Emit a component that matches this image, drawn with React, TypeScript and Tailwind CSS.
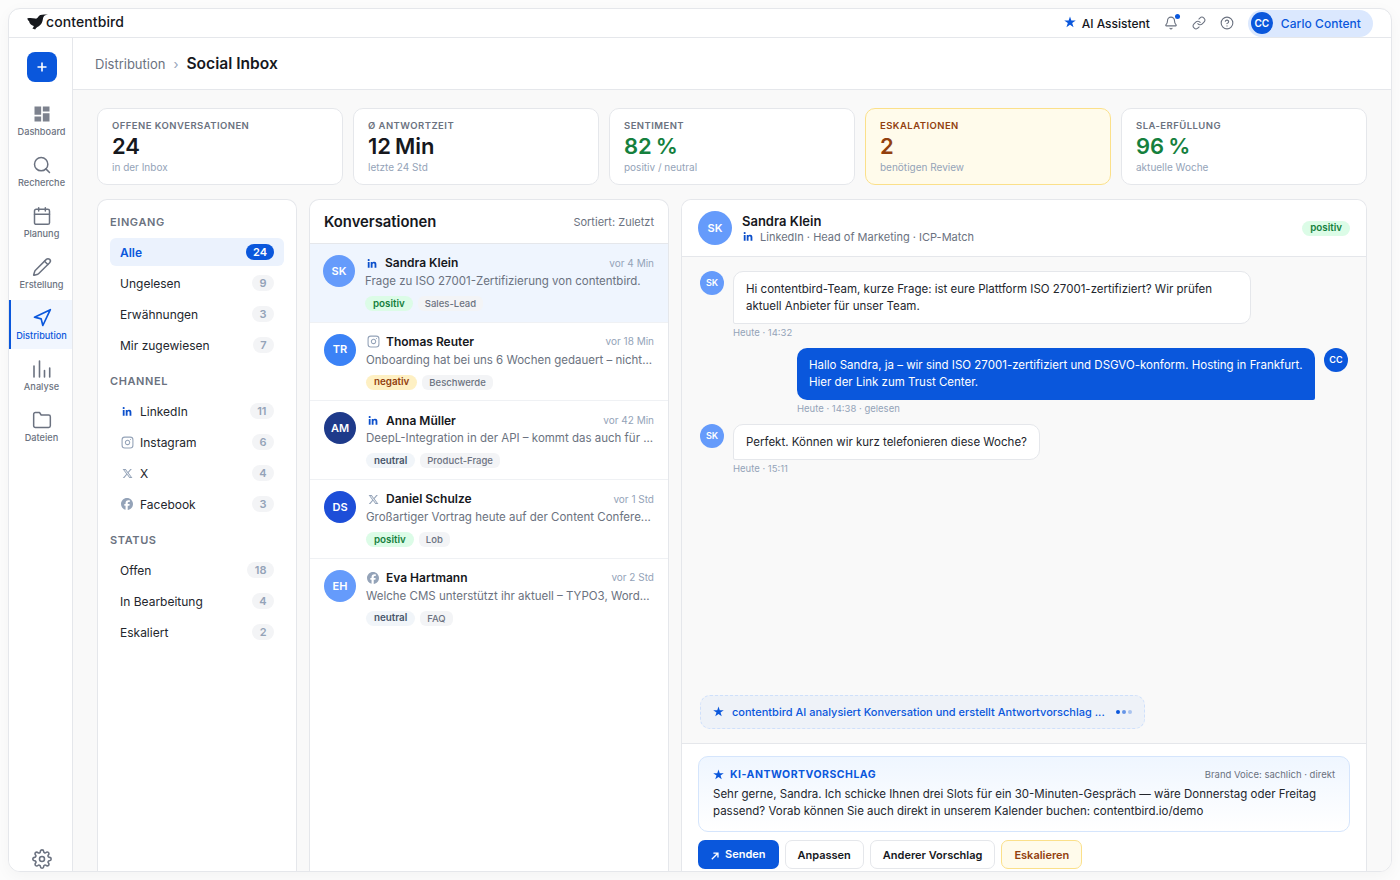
import React from 'react';
import { Bell, Calendar, CircleHelp, Instagram, Pencil, Search } from 'lucide-react';
import { FiFolder, FiLink, FiNavigation, FiSettings } from 'react-icons/fi';
import { FaFacebook, FaLinkedinIn, FaXTwitter } from 'react-icons/fa6';
import { MdDashboard } from 'react-icons/md';
import { clsx } from 'clsx';

type Channel = 'linkedin' | 'instagram' | 'x' | 'facebook';
type Sentiment = 'positiv' | 'negativ' | 'neutral';

interface Conversation {
  initials: string;
  color: string;
  channel: Channel;
  name: string;
  time: string;
  preview: string;
  sentiment: Sentiment;
  tag: string;
  active?: boolean;
}

interface FilterItem {
  label: string;
  count: number;
  channel?: Channel;
  active?: boolean;
}

const navItems = [
  { label: 'Dashboard', icon: <MdDashboard className="size-5 text-[#7d828e]" /> },
  { label: 'Recherche', icon: <Search className="size-5" strokeWidth={1.8} /> },
  { label: 'Planung', icon: <Calendar className="size-5" strokeWidth={1.8} /> },
  { label: 'Erstellung', icon: <Pencil className="size-5" strokeWidth={1.8} /> },
  { label: 'Distribution', icon: <FiNavigation className="size-5" strokeWidth={2} />, active: true },
  { label: 'Analyse', icon: <BarsIcon /> },
  { label: 'Dateien', icon: <FiFolder className="size-5" strokeWidth={1.8} /> },
];

const stats = [
  { label: 'OFFENE KONVERSATIONEN', value: '24', hint: 'in der Inbox', tone: 'text-[#16181d]' },
  { label: 'Ø ANTWORTZEIT', value: '12 Min', hint: 'letzte 24 Std', tone: 'text-[#16181d]' },
  { label: 'SENTIMENT', value: '82 %', hint: 'positiv / neutral', tone: 'text-[#15803d]' },
  { label: 'ESKALATIONEN', value: '2', hint: 'benötigen Review', tone: 'text-[#92400e]', warn: true },
  { label: 'SLA-ERFÜLLUNG', value: '96 %', hint: 'aktuelle Woche', tone: 'text-[#15803d]' },
];

const filters: { title: string; items: FilterItem[] }[] = [
  {
    title: 'EINGANG',
    items: [
      { label: 'Alle', count: 24, active: true },
      { label: 'Ungelesen', count: 9 },
      { label: 'Erwähnungen', count: 3 },
      { label: 'Mir zugewiesen', count: 7 },
    ],
  },
  {
    title: 'CHANNEL',
    items: [
      { label: 'LinkedIn', count: 11, channel: 'linkedin' },
      { label: 'Instagram', count: 6, channel: 'instagram' },
      { label: 'X', count: 4, channel: 'x' },
      { label: 'Facebook', count: 3, channel: 'facebook' },
    ],
  },
  {
    title: 'STATUS',
    items: [
      { label: 'Offen', count: 18 },
      { label: 'In Bearbeitung', count: 4 },
      { label: 'Eskaliert', count: 2 },
    ],
  },
];

const conversations: Conversation[] = [
  {
    initials: 'SK', color: 'bg-[#659bfb]', channel: 'linkedin', name: 'Sandra Klein', time: 'vor 4 Min',
    preview: 'Frage zu ISO 27001-Zertifizierung von contentbird.', sentiment: 'positiv', tag: 'Sales-Lead', active: true,
  },
  {
    initials: 'TR', color: 'bg-[#3b82f6]', channel: 'instagram', name: 'Thomas Reuter', time: 'vor 18 Min',
    preview: 'Onboarding hat bei uns 6 Wochen gedauert – nicht...', sentiment: 'negativ', tag: 'Beschwerde',
  },
  {
    initials: 'AM', color: 'bg-[#1e3a8a]', channel: 'linkedin', name: 'Anna Müller', time: 'vor 42 Min',
    preview: 'DeepL-Integration in der API – kommt das auch für ...', sentiment: 'neutral', tag: 'Product-Frage',
  },
  {
    initials: 'DS', color: 'bg-[#1d4ed8]', channel: 'x', name: 'Daniel Schulze', time: 'vor 1 Std',
    preview: 'Großartiger Vortrag heute auf der Content Confere...', sentiment: 'positiv', tag: 'Lob',
  },
  {
    initials: 'EH', color: 'bg-[#659bfb]', channel: 'facebook', name: 'Eva Hartmann', time: 'vor 2 Std',
    preview: 'Welche CMS unterstützt ihr aktuell – TYPO3, Word...', sentiment: 'neutral', tag: 'FAQ',
  },
];

function BarsIcon() {
  return (
    <svg viewBox="0 0 20 20" className="size-5" fill="none" stroke="currentColor" strokeWidth="1.6" strokeLinecap="round">
      <path d="M2 7v11M7.500 2v16M12.500 11.500v6.500M17.700 9v9" />
    </svg>
  );
}

function Star({ className }: { className?: string }) {
  return (
    <svg viewBox="0 0 24 24" className={clsx('shrink-0 text-[#0a57dc]', className)} fill="currentColor">
      <path d="M12 1l2.700 8h8.800l-7.100 5.100 2.700 8.400L12 17.400l-7.100 5.100 2.700-8.400L.5 9h8.800z" />
    </svg>
  );
}

function Logo() {
  return (
    <div className="flex items-center">
      <svg viewBox="0 0 23 16" className="h-4 w-[23px]" fill="#16181d">
        <path d="M.2 4.400C3 3.800 6 4.200 8.300 4.600 9.800 4.800 10.600 4 11.300 2.800 12.600.6 15 0 21 .6c-3.200.5-4.700 1.600-5 4-.4 3.500-1.700 6.300-4.600 7.900-1.500.8-2.500 1.500-3.200 3l-2.800-.9c.9-.9 1.400-1.600 1.300-2.500C4.300 11.400 2.500 9.800 2.100 7.300 1.300 6.600.7 5.600.2 4.400z" />
      </svg>
      <span className="-ml-1 text-[14px] leading-4 font-medium tracking-[0.1px] text-[#16181d]">contentbird</span>
    </div>
  );
}

function ChannelIcon({ channel }: { channel: Channel }) {
  switch (channel) {
    case 'linkedin':
      return <FaLinkedinIn className="mt-px size-[10px] text-[#0b4fcb]" />;
    case 'instagram':
      return <Instagram className="size-[13px] text-[#94a3b8]" strokeWidth={2} />;
    case 'x':
      return <FaXTwitter className="size-[11px] text-[#94a3b8]" />;
    case 'facebook':
      return <FaFacebook className="size-3 text-[#94a3b8]" />;
  }
}

function SentimentBadge({ value }: { value: Sentiment }) {
  return (
    <span
      className={clsx(
        'flex h-[15px] items-center rounded-full px-2 pt-px text-[9.800px] font-semibold',
        value === 'positiv' && 'bg-[#dcfce7] text-[#15803d]',
        value === 'negativ' && 'bg-[#fef0c3] text-[#92400e]',
        value === 'neutral' && 'bg-[#f1f5f9] text-[#475569]'
      )}
    >
      {value}
    </span>
  );
}

function Avatar({ initials, className }: { initials: string; className: string }) {
  return (
    <div className={clsx('flex shrink-0 items-center justify-center rounded-full font-semibold text-white', className)}>
      {initials}
    </div>
  );
}

function TopBar() {
  return (
    <header className="flex h-[29px] shrink-0 items-center justify-between border-b border-[#e5e7eb] px-[18px]">
      <div className="-mt-0.5">
        <Logo />
      </div>
      <div className="flex items-center text-[#6b7280]">
        <Star className="-mt-0.5 size-3" />
        <span className="mt-px ml-1.5 text-[12px] font-medium text-[#16181d]">AI Assistent</span>
        <div className="relative ml-3.5">
          <Bell className="size-3.5" strokeWidth={1.9} />
          <span className="absolute -top-0.5 -right-0.5 size-[5px] rounded-full bg-[#0a57dc]" />
        </div>
        <FiLink className="ml-3.5 size-3.5" strokeWidth={1.8} />
        <CircleHelp className="ml-3.5 size-3.5" strokeWidth={1.9} />
        <div className="ml-3.5 flex h-[27px] items-center rounded-full bg-[#dbe8fe] pr-3 pl-[3px]">
          <Avatar initials="CC" className="size-[22px] bg-[#0a57dc] text-[10px]" />
          <span className="mt-px ml-2 text-[12px] font-medium tracking-[0.05px] text-[#0a57dc]">Carlo Content</span>
        </div>
      </div>
    </header>
  );
}

function Sidebar() {
  return (
    <nav className="flex w-16 shrink-0 flex-col items-center border-r border-[#e5e7eb] bg-white pt-3.5">
      <button className="ml-0.5 flex size-[30px] items-center justify-center rounded-lg bg-[#0a57dc]">
        <svg viewBox="0 0 10 10" className="size-2.5" stroke="white" strokeWidth="1.6">
          <path d="M5 .5v9M.5 5h9" />
        </svg>
      </button>
      <div className="mt-3.5 flex w-full flex-col gap-0.5">
        {navItems.map((item) => (
          <div
            key={item.label}
            className={clsx(
              'flex h-[49px] flex-col items-center border-l-2 pt-2',
              item.active ? 'border-[#0a57dc] bg-[#f1f6fe] text-[#0a57dc]' : 'border-transparent text-[#6b7280]'
            )}
          >
            {item.icon}
            <span className="mt-0.5 text-[9.200px] leading-3 font-medium">{item.label}</span>
          </div>
        ))}
      </div>
      <FiSettings className="mt-auto mb-0.5 ml-0.5 size-5 text-[#6b7280]" strokeWidth={1.9} />
    </nav>
  );
}

function StatCards() {
  return (
    <div className="grid grid-cols-5 gap-2.5">
      {stats.map((stat) => (
        <div
          key={stat.label}
          className={clsx(
            'h-[77px] rounded-[10px] border px-3.5 pt-2.5',
            stat.warn ? 'border-[#fbe08a] bg-[#fffbeb]' : 'border-[#e5e7eb] bg-white'
          )}
        >
          <div
            className={clsx(
              'text-[9.500px] leading-[13px] font-semibold tracking-[0.45px]',
              stat.warn ? 'text-[#92400e]' : 'text-[#6b7280]'
            )}
          >
            {stat.label}
          </div>
          <div className={clsx('text-[22px] leading-7 font-semibold [word-spacing:-1.5px]', stat.tone)}>{stat.value}</div>
          <div className="text-[10px] leading-[14px] text-[#94a3b8]">{stat.hint}</div>
        </div>
      ))}
    </div>
  );
}

function FilterPanel() {
  return (
    <aside className="flex w-[200px] shrink-0 flex-col gap-3.5 rounded-t-[10px] border border-b-0 border-[#e5e7eb] bg-white px-3 pt-3.5">
      {filters.map((group) => (
        <div key={group.title}>
          <h3 className="mb-2 text-[11px] leading-4 font-semibold tracking-[0.6px] text-[#6b7280]">{group.title}</h3>
          <div className="flex flex-col gap-[3px]">
            {group.items.map((item) => (
              <div
                key={item.label}
                className={clsx(
                  'flex h-7 items-center rounded-md px-2.5 text-[12px]',
                  item.active ? 'bg-[#ebf2fd] font-semibold text-[#0a57dc]' : 'text-[#23262d]'
                )}
              >
                {item.channel && (
                  <span className="mr-1.5 flex w-3.5 justify-center">
                    <ChannelIcon channel={item.channel} />
                  </span>
                )}
                <span className="mt-0.5">{item.label}</span>
                <span
                  className={clsx(
                    'ml-auto flex h-4 items-center rounded-full text-[11px] font-semibold',
                    item.active ? 'bg-[#0a57dc] px-[7px] text-white' : 'bg-[#f3f4f6] px-[7.500px] text-[#94a3b8]'
                  )}
                >
                  {item.count}
                </span>
              </div>
            ))}
          </div>
        </div>
      ))}
    </aside>
  );
}

function ConversationList() {
  return (
    <section className="flex w-[360px] shrink-0 flex-col overflow-hidden rounded-t-[10px] border border-b-0 border-[#e5e7eb] bg-white">
      <div className="flex h-11 shrink-0 items-center justify-between border-b border-[#e5e7eb] px-3.5">
        <h2 className="mt-px text-[14.800px] font-semibold text-[#16181d]">Konversationen</h2>
        <span className="mt-0.5 text-[11px] text-[#6b7280]">Sortiert: Zuletzt</span>
      </div>
      {conversations.map((c) => (
        <div
          key={c.name}
          className={clsx(
            'flex h-[78.700px] shrink-0 gap-2.5 pt-[11px] pr-3.5',
            c.active ? 'bg-[#eff5fe] pl-[13px]' : 'pl-3.5',
            c.name !== 'Eva Hartmann' && 'border-b border-[#eff1f4]'
          )}
        >
          <Avatar initials={c.initials} className={clsx('size-8 text-[11px]', c.color)} />
          <div className="min-w-0 flex-1">
            <div className="flex h-4 items-center">
              <span className="mr-1.5 flex w-3.5 justify-center">
                <ChannelIcon channel={c.channel} />
              </span>
              <span className="mt-[0.500px] text-[12px] font-semibold text-[#16181d]">{c.name}</span>
              <span className="ml-auto text-[10px] text-[#94a3b8]">{c.time}</span>
            </div>
            <p className="mt-[2px] text-[11.500px] leading-4 whitespace-nowrap text-[#6b7280]">{c.preview}</p>
            <div className="mt-[7px] flex gap-[5px]">
              <SentimentBadge value={c.sentiment} />
              <span className="flex h-[15px] items-center rounded-md bg-[#f3f4f6] px-[7px] pt-px text-[9.500px] font-medium text-[#6b7280]">
                {c.tag}
              </span>
            </div>
          </div>
        </div>
      ))}
    </section>
  );
}

function Bubble({ children, time, initials, own }: { children: React.ReactNode; time: string; initials: string; own?: boolean }) {
  return (
    <div className={clsx('flex gap-[9px]', own && 'flex-row-reverse')}>
      <Avatar initials={initials} className={clsx('size-6 text-[9px]', own ? 'bg-[#0a57dc]' : 'bg-[#659bfb]')} />
      <div className="max-w-[518px]">
        <div
          className={clsx(
            'rounded-[10px] px-3 text-[11.500px] leading-[17px]',
            own
              ? 'rounded-br-[2px] bg-[#0a57dc] py-[9px] text-white'
              : 'rounded-bl-[2px] border border-[#e5e7eb] bg-white pt-[9px] pb-2 text-[#23262d]'
          )}
        >
          {children}
        </div>
        <div className="mt-[3px] text-[9.500px] leading-3 text-[#94a3b8]">{time}</div>
      </div>
    </div>
  );
}

function ChatPanel() {
  return (
    <section className="flex min-w-0 flex-1 flex-col overflow-hidden rounded-t-[10px] border border-b-0 border-[#e5e7eb] bg-[#f9f9f9]">
      <div className="flex h-[57px] shrink-0 items-center border-b border-[#e5e7eb] bg-white px-4">
        <Avatar initials="SK" className="size-[34px] bg-[#659bfb] text-[11px]" />
        <div className="mt-0.5 ml-2.5">
          <div className="text-[13px] leading-4 font-semibold text-[#16181d]">Sandra Klein</div>
          <div className="flex h-4 items-center text-[11px] text-[#6b7280]">
            <FaLinkedinIn className="mr-[7px] ml-px size-[10px] text-[#0b4fcb]" />
            LinkedIn · Head of Marketing · ICP-Match
          </div>
        </div>
        <div className="ml-auto">
          <SentimentBadge value="positiv" />
        </div>
      </div>

      <div className="flex flex-1 flex-col gap-[9px] px-[18px] pt-3.5 pb-3.5">
        <Bubble initials="SK" time="Heute · 14:32">
          Hi contentbird-Team, kurze Frage: ist eure Plattform ISO 27001-zertifiziert? Wir prüfen aktuell Anbieter für unser
          Team.
        </Bubble>
        <Bubble initials="CC" time="Heute · 14:38 · gelesen" own>
          Hallo Sandra, ja – wir sind ISO 27001-zertifiziert und DSGVO-konform. Hosting in Frankfurt. Hier der Link zum Trust
          Center.
        </Bubble>
        <Bubble initials="SK" time="Heute · 15:11">
          Perfekt. Können wir kurz telefonieren diese Woche?
        </Bubble>

        <div className="mt-auto flex h-[34px] items-center self-start rounded-[10px] border border-dashed border-[#cfe0fb] bg-[#eef2f8] px-3">
          <Star className="-mt-0.5 size-[11px]" />
          <span className="ml-2 text-[11px] font-medium text-[#0a57dc]">
            contentbird AI analysiert Konversation und erstellt Antwortvorschlag ...
          </span>
          <span className="ml-[11px] flex gap-0.5">
            <i className="size-1 rounded-full bg-[#0a57dc]" />
            <i className="size-1 rounded-full bg-[#0a57dc]/60" />
            <i className="size-1 rounded-full bg-[#0a57dc]/30" />
          </span>
        </div>
      </div>

      <div className="h-[128px] shrink-0 border-t border-[#e5e7eb] bg-white px-4 pt-3">
        <div className="h-[76px] rounded-[10px] border border-[#d5e5fc] bg-gradient-to-b from-[#eff6ff] to-white px-3.5 pt-2.5">
          <div className="flex h-4 items-center">
            <Star className="-mt-0.5 size-[11px]" />
            <span className="ml-1.5 text-[10.500px] font-bold tracking-[0.5px] text-[#0a57dc]">KI-ANTWORTVORSCHLAG</span>
            <span className="ml-auto text-[9.500px] text-[#6b7280]">Brand Voice: sachlich · direkt</span>
          </div>
          <p className="mt-[3px] text-[11.500px] leading-[17px] text-[#23262d]">
            Sehr gerne, Sandra. Ich schicke Ihnen drei Slots für ein 30-Minuten-Gespräch — wäre Donnerstag oder Freitag
            passend? Vorab können Sie auch direkt in unserem Kalender buchen: contentbird.io/demo
          </p>
        </div>
        <div className="mt-2 flex gap-1.5 text-[11px] font-semibold">
          <button className="flex h-[29px] items-center rounded-[7px] bg-[#0a57dc] px-[13px] text-white">
            <svg viewBox="0 0 10 10" className="mt-0.5 mr-1.5 size-2" fill="none" stroke="currentColor" strokeWidth="1.6">
              <path d="M1 9l7.500-7.500M3 1.300h5.700V7" />
            </svg>
            Senden
          </button>
          <button className="h-[29px] rounded-[7px] border border-[#e5e7eb] px-3 pt-0.5 text-[#16181d]">Anpassen</button>
          <button className="h-[29px] rounded-[7px] border border-[#e5e7eb] px-3 pt-0.5 text-[#16181d]">Anderer Vorschlag</button>
          <button className="h-[29px] rounded-[7px] border border-[#fbe08a] bg-[#fffbeb] px-3 pt-0.5 text-[#92400e]">
            Eskalieren
          </button>
        </div>
      </div>
    </section>
  );
}

export default function App() {
  return (
    <div className="h-[880px] w-[1400px] bg-[#fcfcfc] p-2 font-['Inter',sans-serif]">
      <div className="flex h-[864px] flex-col overflow-hidden rounded-xl border border-[#e5e7eb] bg-white shadow-[0_4px_16px_rgba(0,0,0,0.04)]">
        <TopBar />
        <div className="flex min-h-0 flex-1">
          <Sidebar />
          <main className="flex min-w-0 flex-1 flex-col bg-[#f9f9f9]">
            <div className="flex h-[52px] shrink-0 items-center border-b border-[#e5e7eb] bg-white px-[22px]">
              <span className="mt-0.5 text-[13px] text-[#6b7280]">Distribution</span>
              <span className="mx-2 mt-0.5 text-[13px] text-[#94a3b8]">›</span>
              <h1 className="text-[15.600px] font-semibold text-[#16181d]">Social Inbox</h1>
            </div>
            <div className="flex min-h-0 flex-1 flex-col px-6 pt-[18px]">
              <StatCards />
              <div className="mt-3.5 flex min-h-0 flex-1 gap-3">
                <FilterPanel />
                <ConversationList />
                <ChatPanel />
              </div>
            </div>
          </main>
        </div>
      </div>
    </div>
  );
}
